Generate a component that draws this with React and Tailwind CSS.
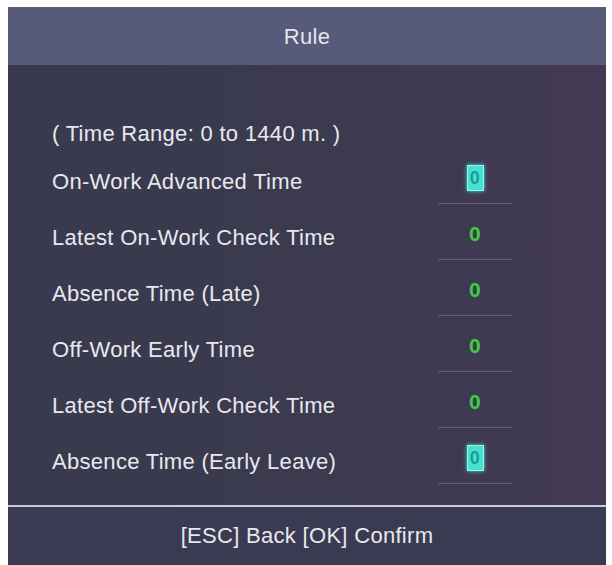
import React from 'react'

const rows = [
  { label: 'On-Work Advanced Time', value: '0', active: true },
  { label: 'Latest On-Work Check Time', value: '0' },
  { label: 'Absence Time (Late)', value: '0' },
  { label: 'Off-Work Early Time', value: '0' },
  { label: 'Latest Off-Work Check Time', value: '0' },
  { label: 'Absence Time (Early Leave)', value: '0', active: true },
]

function ValueCell({ value, active }) {
  return (
    <div className="w-[74px] h-full flex flex-col justify-end pb-[5px]">
      <div className="h-[44px] pb-2 flex items-center justify-center border-b border-[#5c5c72]">
        {active ? (
          <span className="w-[17px] h-[26px] flex items-center justify-center bg-[#45e2d2] border border-[#9af5ec] shadow-[0_0_4px_#45e2d2] text-[#1a9c96] text-[18px] leading-none font-bold">
            {value}
          </span>
        ) : (
          <span className="text-[#3ccc44] text-[21px] leading-none font-bold">{value}</span>
        )}
      </div>
    </div>
  )
}

export default function App() {
  return (
    <div
      className="w-[612px] h-[565px] bg-white pt-[7px] pl-[8px] overflow-hidden"
      style={{ fontFamily: '"Liberation Sans", Arial, sans-serif' }}
    >
      <div className="w-[598px] h-[558px] flex flex-col bg-[#3a3b4f] text-[#e8e8ee] text-[22px] tracking-[0.3px]">
        {/* title bar */}
        <div className="h-[58px] shrink-0 flex items-center justify-center bg-[#575a78] text-[#e4e4ee]">
          Rule
        </div>

        {/* settings list */}
        <div className="h-[440px] shrink-0 flex flex-col pt-[48px] pl-[44px] bg-gradient-to-r from-[#393a4e] via-[#3b3a4f] to-[#423a52]">
          <div className="h-[40px] flex items-center">( Time Range: 0 to 1440 m. )</div>
          {rows.map((row) => (
            <div key={row.label} className="h-14 flex items-center">
              <div className="w-[386px]">{row.label}</div>
              <ValueCell value={row.value} active={row.active} />
            </div>
          ))}
        </div>

        {/* key hints */}
        <div className="h-[2px] shrink-0 bg-[#c9c9d8]" />
        <div className="flex-1 flex items-center justify-center bg-[#3a3b52] pb-[2px]">
          [ESC] Back [OK] Confirm
        </div>
      </div>
    </div>
  )
}
